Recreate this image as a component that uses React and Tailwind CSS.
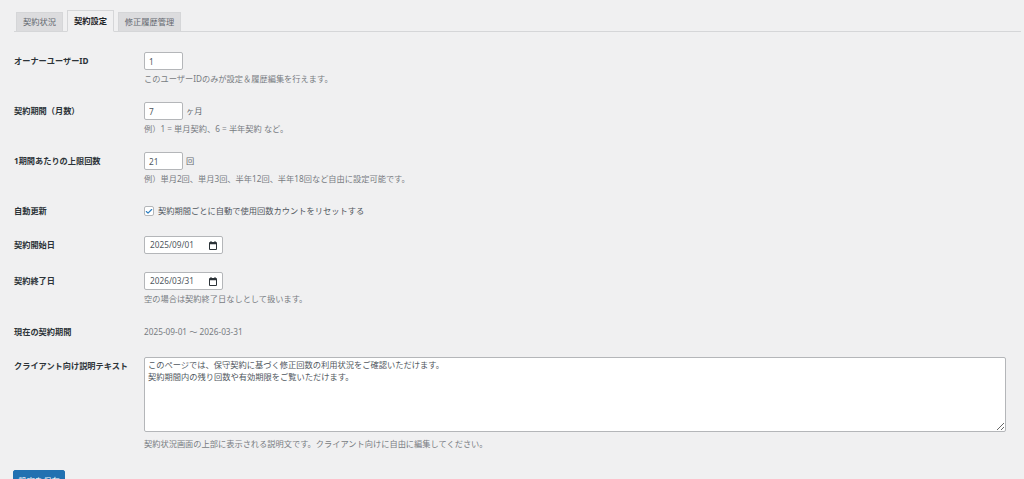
import { Check } from 'lucide-react'

const font = { fontFamily: '"Noto Sans", "Noto Sans CJK JP", sans-serif' }

function Row({ label, className = '', children }) {
  return (
    <div className={`flex ${className}`}>
      <div className="w-[130px] shrink-0 text-[8.2px] leading-[12px] font-bold text-[#2c3338]">{label}</div>
      <div className="flex-1 min-w-0">{children}</div>
    </div>
  )
}

function Help({ children, className = 'mt-[3px]' }) {
  return <p className={`text-[8.23px] leading-[12px] text-[#787c82] ${className}`}>{children}</p>
}

function NumberBox({ value }) {
  return (
    <input
      readOnly
      value={value}
      className="block w-[39px] h-[18px] bg-white border border-[#b4b6b9] rounded-[2px] px-[4px] text-[8.25px] text-[#50575e] outline-none"
    />
  )
}

function DateBox({ value }) {
  return (
    <div className="flex items-center justify-between w-[79px] h-[18px] bg-white border border-[#b4b6b9] rounded-[2px] pl-[5px] pr-[5px] text-[8.25px] text-[#50575e]">
      <span>{value}</span>
      <svg width="8" height="9" viewBox="0 0 8 9" fill="#2c3338">
        <path d="M1.5 0h1v1h3V0h1v1H7a1 1 0 0 1 1 1v6a1 1 0 0 1-1 1H1a1 1 0 0 1-1-1V2a1 1 0 0 1 1-1h.5V0zM1 3.2V8h6V3.2H1z" />
      </svg>
    </div>
  )
}

export default function App() {
  return (
    <div style={font} className="h-[479px] overflow-hidden bg-[#f0f0f1] pl-[14px] pr-[3px] pt-[10px]">
      {/* Tabs */}
      <div className="flex h-[22px] items-end gap-[4px] pl-[2px] border-b border-[#d5d6d8] text-[8.25px] font-bold">
        <div className="flex items-center justify-center w-[47px] h-[20px] -mb-px border border-[#d5d6d8] bg-[#dcdcde] text-[#646970] font-normal">契約状況</div>
        <div className="flex items-center justify-center w-[47px] h-[22px] -mb-px border border-[#d5d6d8] border-b-[#f0f0f1] bg-[#f0f0f1] text-[#1d2327]">契約設定</div>
        <div className="flex items-center justify-center w-[63px] h-[20px] -mb-px border border-[#d5d6d8] bg-[#dcdcde] text-[#646970] font-normal">修正履歴管理</div>
      </div>

      {/* Settings form */}
      <div className="mt-[20px]">
        <Row label={<span className="block pt-[3px]">オーナーユーザーID</span>}>
          <NumberBox value="1" />
          <Help>このユーザーIDのみが設定＆履歴編集を行えます。</Help>
        </Row>

        <Row className="mt-[17px]" label={<span className="block pt-[3px]">契約期間（月数）</span>}>
          <div className="flex items-center gap-[3px]">
            <NumberBox value="7" />
            <span className="text-[8.25px] text-[#646970]">ヶ月</span>
          </div>
          <Help>例）1 = 単月契約、6 = 半年契約 など。</Help>
        </Row>

        <Row className="mt-[17px]" label={<span className="block pt-[3px]">1期間あたりの上限回数</span>}>
          <div className="flex items-center gap-[3px]">
            <NumberBox value="21" />
            <span className="text-[8.25px] text-[#646970]">回</span>
          </div>
          <Help>例）単月2回、単月3回、半年12回、半年18回など自由に設定可能です。</Help>
        </Row>

        <Row className="mt-[20px]" label="自動更新">
          <div className="flex items-center gap-[4px] h-[12px]">
            <span className="flex items-center justify-center w-[10px] h-[10px] bg-white border border-[#b4b6b9] rounded-[2px]">
              <Check size={9} strokeWidth={3.5} color="#2f7fc1" />
            </span>
            <span className="text-[8.25px] text-[#50575e]">契約期間ごとに自動で使用回数カウントをリセットする</span>
          </div>
        </Row>

        <Row className="mt-[19px]" label={<span className="block pt-[3px]">契約開始日</span>}>
          <DateBox value="2025/09/01" />
        </Row>

        <Row className="mt-[18px]" label={<span className="block pt-[3px]">契約終了日</span>}>
          <DateBox value="2026/03/31" />
          <Help>空の場合は契約終了日なしとして扱います。</Help>
        </Row>

        <Row className="mt-[21px]" label="現在の契約期間">
          <span className="block text-[8.25px] leading-[12px] text-[#787c82]">2025-09-01 〜 2026-03-31</span>
        </Row>

        <Row className="mt-[19px]" label={<span className="block pt-[3px]">クライアント向け説明テキスト</span>}>
          <textarea
            readOnly
            value={'このページでは、保守契約に基づく修正回数の利用状況をご確認いただけます。\n契約期間内の残り回数や有効期限をご覧いただけます。'}
            className="block w-[862px] h-[75px] bg-white border border-[#b4b6b9] rounded-[2px] px-[3px] py-[1px] text-[8.25px] leading-[12px] text-[#50575e] outline-none"
          />
          <Help className="mt-[6px]">契約状況画面の上部に表示される説明文です。クライアント向けに自由に編集してください。</Help>
        </Row>

        <button className="block mt-[20px] -ml-px w-[52px] h-[22px] bg-[#2271b1] border border-[#2271b1] rounded-[2px] text-[8.25px] text-white">設定を保存</button>
      </div>
    </div>
  )
}
